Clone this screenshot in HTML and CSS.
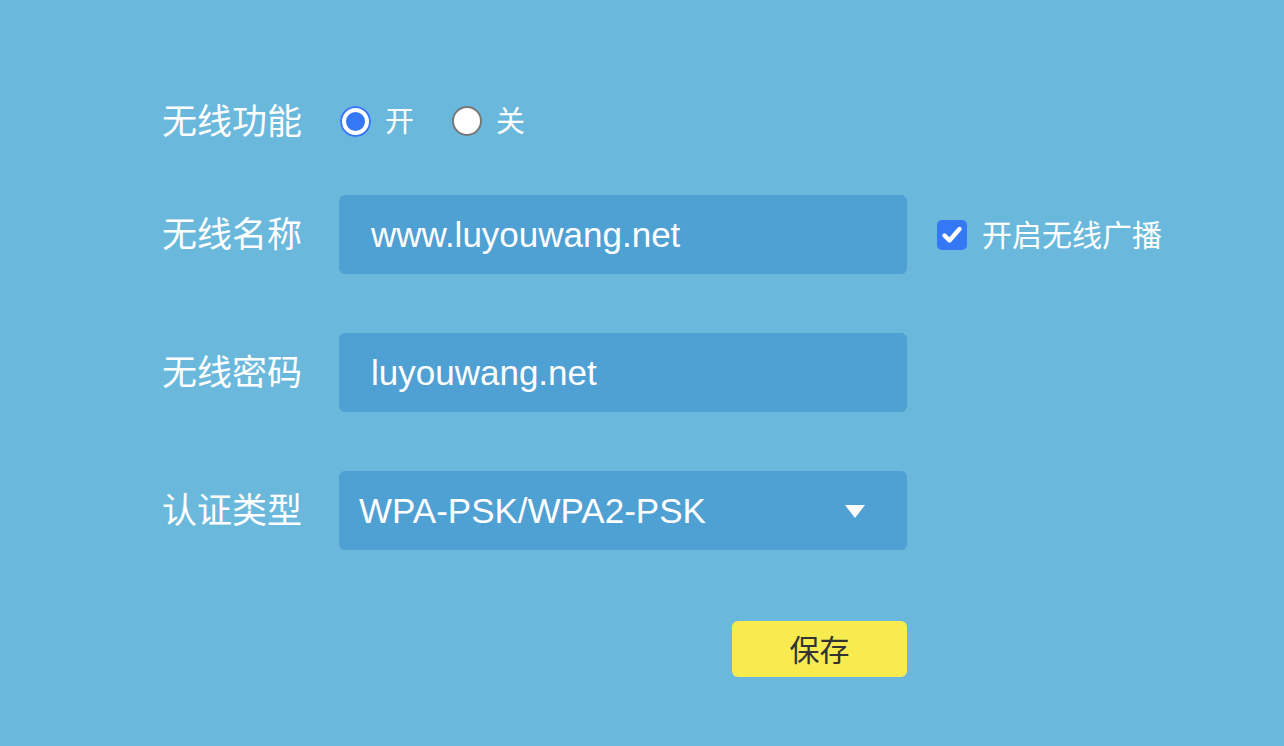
FILE: index.html
```html
<!DOCTYPE html>
<html lang="zh-CN">
<head>
<meta charset="utf-8">
<title>无线设置</title>
<link rel="stylesheet" href="styles.css">
</head>
<body>
<div class="form">
  <div class="row switch-row">
    <div class="label">无线功能</div>
    <div class="radios">
      <span class="radio radio-on"></span><span class="radio-text">开</span>
      <span class="radio radio-off"></span><span class="radio-text">关</span>
    </div>
  </div>
  <div class="row field-row">
    <div class="label">无线名称</div>
    <div class="box text-box">www.luyouwang.net</div>
    <div class="check">
      <span class="checkbox">
        <svg viewBox="0 0 30 30" width="30" height="30"><path d="M7.5 15.5 L12.5 20.5 L22.5 9" fill="none" stroke="#fff" stroke-width="4.4" stroke-linecap="round" stroke-linejoin="round"/></svg>
      </span>
      <span class="check-text">开启无线广播</span>
    </div>
  </div>
  <div class="row field-row">
    <div class="label">无线密码</div>
    <div class="box text-box">luyouwang.net</div>
  </div>
  <div class="row field-row">
    <div class="label">认证类型</div>
    <div class="box select-box">
      <span>WPA-PSK/WPA2-PSK</span>
      <span class="arrow"></span>
    </div>
  </div>
  <div class="row btn-row">
    <div class="btn">保存</div>
  </div>
</div>
</body>
</html>
```
FILE: styles.css
```css
html, body {
  margin: 0;
  padding: 0;
  background: #6ab9dc;
  height: 100%;
}
body {
  font-family: "Liberation Sans", "Noto Sans CJK SC", sans-serif;
  color: #fff;
}
.form {
  padding: 97px 0 0 162px;
  display: flex;
  flex-direction: column;
}
.row {
  display: flex;
  align-items: center;
}
.label {
  width: 177px;
  font-family: "Noto Sans CJK SC", sans-serif;
  font-size: 35px;
  line-height: 40px;
  padding-bottom: 5px;
  color: #fff;
  flex: none;
}
.switch-row {
  height: 48px;
  margin-bottom: 50px;
}
.radios {
  display: flex;
  align-items: center;
}
.radio {
  width: 31px;
  height: 31px;
  border-radius: 50%;
  box-sizing: border-box;
  flex: none;
  margin-left: 1px;
}
.radio-on {
  background: #3478f6;
  box-shadow: inset 0 0 0 2px #3478f6, inset 0 0 0 6px #fff;
}
.radio-off {
  width: 30px;
  height: 30px;
  background: #fff;
  border: 2px solid #777;
  margin-left: 38px;
}
.radio-text {
  font-family: "Noto Sans CJK SC", sans-serif;
  font-size: 29px;
  margin-left: 14px;
  padding-bottom: 4px;
}
.field-row {
  height: 79px;
  margin-bottom: 59px;
}
.box {
  width: 568px;
  height: 79px;
  background: #4fa0d3;
  border-radius: 6px;
  box-sizing: border-box;
  display: flex;
  align-items: center;
  font-size: 35px;
  color: #fff;
  flex: none;
}
.text-box {
  padding-left: 32px;
}
.select-box {
  padding-left: 20px;
  padding-right: 42px;
  justify-content: space-between;
}
.arrow {
  width: 0;
  height: 0;
  border-left: 10px solid transparent;
  border-right: 10px solid transparent;
  border-top: 13px solid #fff;
  margin-top: 2px;
}
.check {
  display: flex;
  align-items: center;
  margin-left: 30px;
}
.checkbox {
  width: 30px;
  height: 30px;
  border-radius: 5px;
  background: #3478f6;
  display: block;
}
.checkbox svg {
  display: block;
}
.check-text {
  font-family: "Noto Sans CJK SC", sans-serif;
  font-size: 30px;
  margin-left: 15px;
  padding-bottom: 4px;
}
.btn-row {
  margin-top: 12px;
  width: 745px;
  justify-content: flex-end;
}
.btn {
  width: 175px;
  height: 56px;
  background: #f7eb50;
  border-radius: 6px;
  color: #333;
  font-family: "Noto Sans CJK SC", sans-serif;
  font-size: 30px;
  display: flex;
  align-items: center;
  justify-content: center;
  padding-bottom: 3px;
  box-sizing: border-box;
}
```
